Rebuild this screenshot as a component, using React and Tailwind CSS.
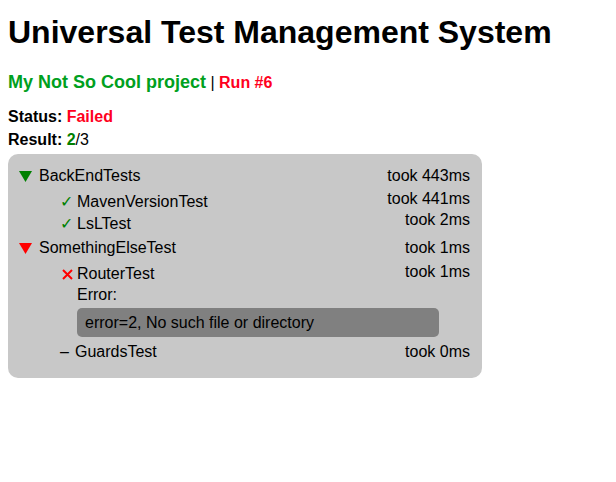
function Triangle({ color }) {
  return (
    <svg width="13" height="11" viewBox="0 0 13 11" className="mr-[7px] ml-[1px]">
      <polygon points="0,0 13,0 6.5,11" fill={color} />
    </svg>
  );
}

function Cross() {
  return (
    <span className="flex h-[22px] w-[17px] items-center">
      <svg width="11" height="11" viewBox="0 0 11 11" className="ml-[2px] mt-[1px]">
        <path d="M1 1L10 10M10 1L1 10" stroke="#ff0000" strokeWidth="2" />
      </svg>
    </span>
  );
}

export default function App() {
  return (
    <div className="px-2 pt-[12px] text-black" style={{ fontFamily: '"Liberation Sans", Arial, sans-serif' }}>
      <h1 className="text-[32px] font-bold leading-[40px]">Universal Test Management System</h1>

      <div className="mt-[19px] text-[18px] leading-[22px]">
        <span className="font-bold text-[#00a020]">My Not So Cool project</span>
        <span className="text-[16px]"> | </span>
        <span className="text-[16px] font-bold text-[#ff0020]">Run #6</span>
      </div>

      <div className="mt-[11px] text-[16px] leading-[23px]">
        <div>
          <span className="font-bold">Status: </span>
          <span className="font-bold text-[#ff0020]">Failed</span>
        </div>
        <div>
          <span className="font-bold">Result: </span>
          <span className="font-bold text-[#008000]">2</span>
          <span>/3</span>
        </div>
      </div>

      <div className="mt-[3px] w-[474px] rounded-[10px] bg-[#c8c8c8] pl-[10px] pr-[12px] pt-[11px] pb-[15px] text-[16px] leading-[22px]">
        {/* BackEndTests */}
        <div className="flex h-[23px] justify-between">
          <div className="flex items-center h-[22px]">
            <Triangle color="#008000" />
            <span>BackEndTests</span>
          </div>
          <span>took 443ms</span>
        </div>
        <div className="flex h-[21px] justify-between">
          <div className="flex pl-[42px] pt-[3px]">
            <span className="w-[17px] text-[#008000]">✓</span>
            <span>MavenVersionTest</span>
          </div>
          <span>took 441ms</span>
        </div>
        <div className="flex h-[28px] justify-between">
          <div className="flex pl-[42px] pt-[4px]">
            <span className="w-[17px] text-[#008000]">✓</span>
            <span>LsLTest</span>
          </div>
          <span>took 2ms</span>
        </div>

        {/* SomethingElseTest */}
        <div className="flex h-[24px] justify-between">
          <div className="flex items-center h-[22px]">
            <Triangle color="#ff0000" />
            <span>SomethingElseTest</span>
          </div>
          <span>took 1ms</span>
        </div>
        <div className="flex justify-between">
          <div className="pl-[42px] pt-[2px]">
            <div className="flex">
              <Cross />
              <span>RouterTest</span>
            </div>
            <div className="pl-[17px] leading-[20px]">Error:</div>
          </div>
          <span>took 1ms</span>
        </div>
        <div className="mt-[3px] ml-[59px] w-[362px] rounded-[5px] bg-[#808080] px-[8px] py-[3px] leading-[23px]">
          error=2, No such file or directory
        </div>
        <div className="mt-[4px] flex justify-between">
          <div className="flex pl-[42px]">
            <span className="w-[15px]">–</span>
            <span>GuardsTest</span>
          </div>
          <span>took 0ms</span>
        </div>
      </div>
    </div>
  );
}
